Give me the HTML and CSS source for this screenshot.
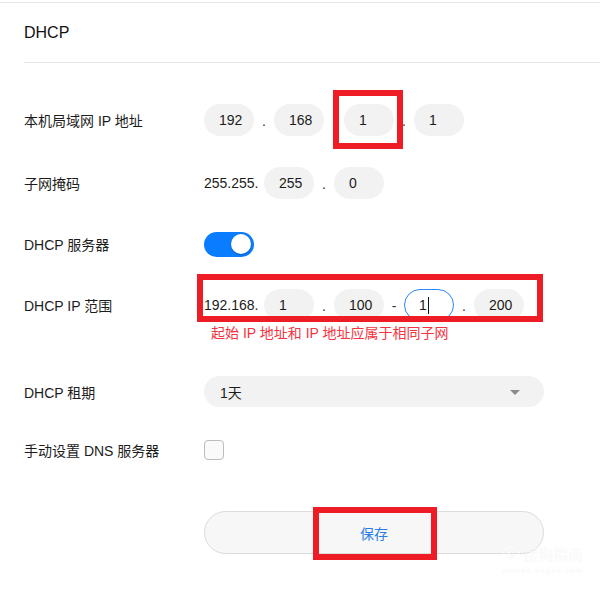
FILE: index.html
```html
<!DOCTYPE html>
<html lang="zh-CN">
<head>
<meta charset="utf-8">
<title>DHCP</title>
<link rel="stylesheet" href="styles.css">
</head>
<body>
<div class="page">
  <div class="header">DHCP</div>
  <div class="form">
    <div class="row row-1">
      <div class="label">本机局域网 IP 地址</div>
      <div class="field">
        <span class="pill">192</span><span class="sep">.</span><span class="pill">168</span><span class="sep">.</span><span class="pill">1</span><span class="sep">.</span><span class="pill">1</span>
      </div>
    </div>
    <div class="row row-2">
      <div class="label">子网掩码</div>
      <div class="field">
        <span class="prefix">255.255.</span><span class="pill">255</span><span class="sep">.</span><span class="pill">0</span>
      </div>
    </div>
    <div class="row row-3">
      <div class="label">DHCP 服务器</div>
      <div class="field">
        <span class="toggle"><span class="knob"></span></span>
      </div>
    </div>
    <div class="row row-4">
      <div class="label">DHCP IP 范围</div>
      <div class="field">
        <span class="prefix">192.168.</span><span class="pill">1</span><span class="sep">.</span><span class="pill">100</span><span class="sep">-</span><span class="pill pill-focus">1<span class="caret"></span></span><span class="sep">.</span><span class="pill">200</span>
      </div>
    </div>
    <div class="error">起始 IP 地址和 IP 地址应属于相同子网</div>
    <div class="row row-5">
      <div class="label">DHCP 租期</div>
      <div class="field">
        <div class="select"><span>1天</span><span class="arrow"></span></div>
      </div>
    </div>
    <div class="row row-6">
      <div class="label">手动设置 DNS 服务器</div>
      <div class="field">
        <span class="checkbox"></span>
      </div>
    </div>
    <div class="actions">
      <div class="btn">保存</div>
    </div>
  </div>

  <div class="mark mark-ip"></div>
  <div class="mark mark-range"></div>
  <div class="mark mark-save"></div>

  <div class="watermark">
    <div class="wm-top"><span class="wm-logo">S</span>搜狗指南</div>
    <div class="wm-url">zhinan.sogou.com</div>
  </div>
</div>
</body>
</html>
```
FILE: styles.css
```css
html, body {
  margin: 0;
  padding: 0;
  background: #ffffff;
}

body {
  font-family: "Liberation Sans", Arial, "Noto Sans CJK SC", sans-serif;
  font-size: 14px;
  color: #1c1c1c;
}

.page {
  position: relative;
  width: 600px;
  height: 600px;
  margin-top: 2px;
  border-top: 1px solid #e6e6e6;
  overflow: hidden;
}

.header {
  margin-left: 24px;
  height: 59px;
  border-bottom: 1px solid #e8e8e8;
  display: flex;
  align-items: center;
  font-size: 16px;
  color: #111;
}

.form {
  padding-left: 24px;
}

.row {
  display: flex;
  align-items: center;
  height: 32px;
}

.row-1 { margin-top: 41px; }
.row-2 { margin-top: 31px; }
.row-3 { margin-top: 29px; }
.row-4 { margin-top: 29px; }
.row-5 { margin-top: 33px; height: 31px; }
.row-6 { margin-top: 27px; }

.label {
  width: 180px;
  flex: none;
  white-space: nowrap;
}

.field {
  display: flex;
  align-items: center;
}

.pill {
  display: flex;
  align-items: center;
  box-sizing: border-box;
  width: 50px;
  height: 32px;
  padding-left: 15px;
  border-radius: 16px;
  background: #f2f2f2;
}

.pill-focus {
  background: #ffffff;
  border: 1px solid #2b88f5;
  padding-left: 14px;
}

.caret {
  display: inline-block;
  width: 1px;
  height: 17px;
  margin-left: 1px;
  background: #111;
}

.sep {
  width: 20px;
  text-align: center;
  line-height: 32px;
  padding-top: 2px;
  box-sizing: border-box;
  color: #333;
}

.prefix {
  width: 60px;
}

.toggle {
  box-sizing: border-box;
  width: 50px;
  height: 25px;
  border-radius: 13px;
  background: #0a7cff;
  display: flex;
  align-items: center;
  justify-content: flex-end;
  padding-right: 3px;
}

.knob {
  width: 20px;
  height: 20px;
  border-radius: 50%;
  background: #ffffff;
  box-shadow: 0 1px 2px rgba(0, 0, 0, 0.25);
}

.error {
  margin-top: 2px;
  margin-left: 187px;
  line-height: 20px;
  color: #f5333f;
}

.select {
  box-sizing: border-box;
  width: 340px;
  height: 31px;
  border-radius: 16px;
  background: #f2f2f2;
  padding-left: 16px;
  padding-right: 24px;
  display: flex;
  align-items: center;
  justify-content: space-between;
}

.arrow {
  width: 0;
  height: 0;
  border-left: 5px solid transparent;
  border-right: 5px solid transparent;
  border-top: 5px solid #8a8a8a;
  margin-top: 1px;
}

.checkbox {
  box-sizing: border-box;
  width: 20px;
  height: 20px;
  border: 1px solid #bcbcbc;
  border-radius: 4px;
  background: #fafafa;
}

.actions {
  margin-top: 45px;
  padding-left: 180px;
}

.btn {
  box-sizing: border-box;
  width: 340px;
  height: 43px;
  border: 1px solid #dcdcdc;
  border-radius: 22px;
  background: #f7f7f7;
  display: flex;
  align-items: center;
  justify-content: center;
  color: #2a7de6;
}

.mark {
  position: absolute;
  box-sizing: border-box;
  border: 6px solid #ee1c25;
}

.mark-ip {
  left: 333px;
  top: 87px;
  width: 70px;
  height: 59px;
}

.mark-range {
  left: 197px;
  top: 271px;
  width: 346px;
  height: 48px;
}

.mark-save {
  left: 313px;
  top: 504px;
  width: 124px;
  height: 53px;
}

.watermark {
  position: absolute;
  left: 502px;
  top: 542px;
  color: rgba(255, 255, 255, 0.85);
  text-shadow: 0 0 1px rgba(0, 0, 0, 0.08);
}

.wm-top {
  display: flex;
  align-items: center;
  font-size: 15px;
  line-height: 20px;
}

.wm-logo {
  display: inline-flex;
  align-items: center;
  justify-content: center;
  width: 16px;
  height: 16px;
  margin-right: 3px;
  border-radius: 50%;
  border: 1px solid rgba(255, 255, 255, 0.85);
  box-shadow: 0 0 1px rgba(0, 0, 0, 0.08);
  font-size: 11px;
  font-weight: bold;
}

.wm-url {
  font-size: 8px;
  letter-spacing: 1px;
  line-height: 12px;
}
```
